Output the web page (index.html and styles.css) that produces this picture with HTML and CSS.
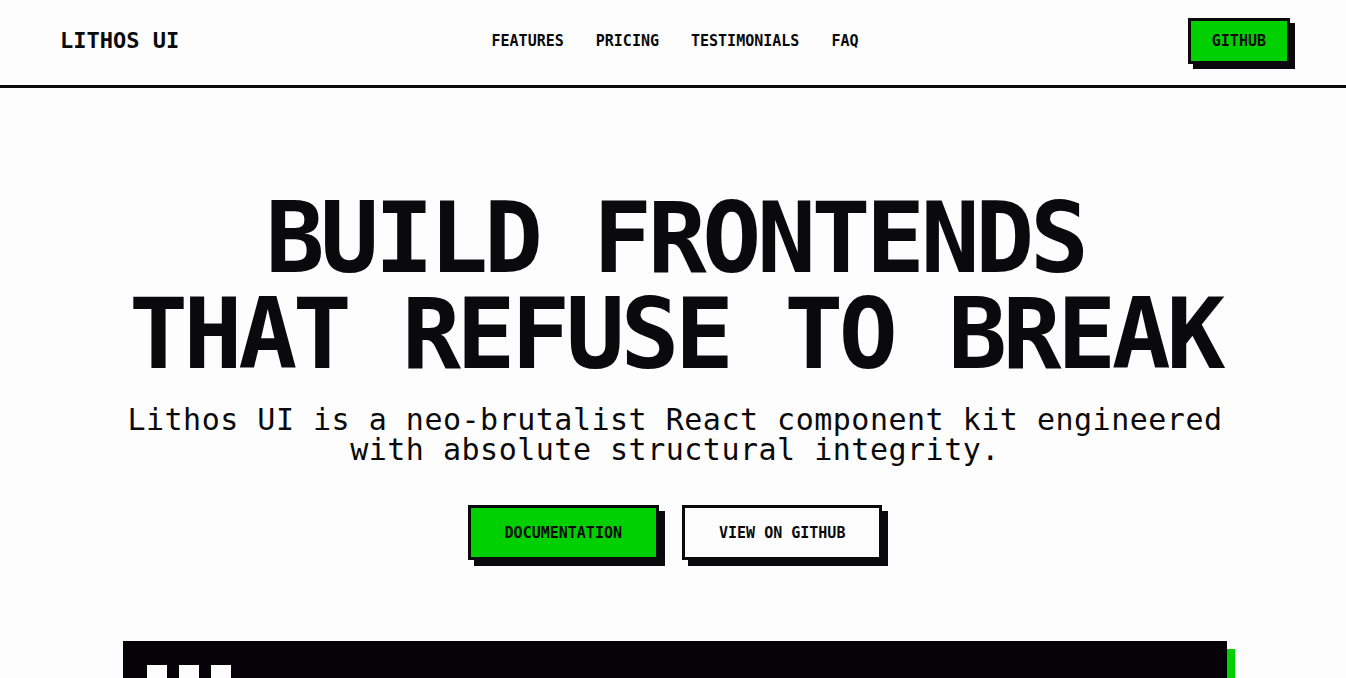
FILE: index.html
```html
<!DOCTYPE html>
<html lang="en">
<head>
    <meta charset="UTF-8">
    <meta name="viewport" content="width=device-width, initial-scale=1.0">
    <title>Lithos UI</title>
    <link rel="stylesheet" href="styles.css">
</head>
<body>
    <header class="site-header">
        <a href="#" class="logo">LITHOS UI</a>
        <nav class="nav">
            <a href="#features">FEATURES</a>
            <a href="#pricing">PRICING</a>
            <a href="#testimonials">TESTIMONIALS</a>
            <a href="#faq">FAQ</a>
        </nav>
        <a href="#" class="btn btn-small btn-green">GITHUB</a>
    </header>

    <main>
        <section class="hero">
            <h1>BUILD FRONTENDS<br>THAT REFUSE TO BREAK</h1>
            <p class="tagline">Lithos UI is a neo-brutalist React component kit engineered with absolute structural integrity.</p>

            <div class="hero-actions">
                <a href="#" class="btn btn-green">DOCUMENTATION</a>
                <a href="#" class="btn btn-white">VIEW ON GITHUB</a>
            </div>

            <div class="code-window">
                <div class="window-dots">
                    <span></span>
                    <span></span>
                    <span></span>
                </div>
            </div>
        </section>
    </main>
</body>
</html>
```

FILE: styles.css
```css
body {
    margin: 0;
    padding: 0;
    font-family: "DejaVu Sans Mono", "Liberation Mono", monospace;
    background-color: #fdfdfd;
    color: #0a0a0c;
    overflow: hidden;
}

a {
    color: inherit;
    text-decoration: none;
}

.site-header {
    height: 81px;
    display: grid;
    grid-template-columns: 1fr auto 1fr;
    align-items: center;
    padding: 0 56px 4px 60px;
    border-bottom: 3px solid #0a0a0c;
    background-color: #fdfdfd;
}

.logo {
    font-size: 22px;
    font-weight: bold;
    justify-self: start;
}

.nav {
    display: flex;
    gap: 32px;
    font-size: 15px;
    font-weight: bold;
}

.btn {
    display: inline-flex;
    align-items: center;
    justify-content: center;
    box-sizing: border-box;
    height: 55px;
    padding: 0 34px;
    border: 3px solid #0a0a0c;
    box-shadow: 6px 6px 0 #0a0a0c;
    font-size: 15px;
    font-weight: bold;
}

.btn-small {
    justify-self: end;
    height: 46px;
    padding: 0 21px;
    box-shadow: 5px 5px 0 #0a0a0c;
}

.btn-green {
    background-color: #00d000;
}

.btn-white {
    background-color: #fdfdfd;
}

.hero {
    padding: 102px 24px 0 28px;
    text-align: center;
}

.hero h1 {
    margin: 0;
    font-size: 98px;
    line-height: 96px;
    letter-spacing: -4.4px;
    font-weight: bold;
}

.tagline {
    max-width: 1100px;
    margin: 23px auto 0;
    font-size: 30px;
    line-height: 30px;
    letter-spacing: 0.5px;
}

.hero-actions {
    display: flex;
    justify-content: center;
    gap: 23px;
    margin-top: 40px;
}

.code-window {
    box-sizing: border-box;
    width: 1104px;
    height: 420px;
    margin: 81px auto 0;
    padding: 24px;
    background-color: #050308;
    box-shadow: 8px 8px 0 #00d000;
}

.window-dots {
    display: flex;
    gap: 12px;
}

.window-dots span {
    width: 20px;
    height: 20px;
    background-color: #fdfdfd;
}
```
